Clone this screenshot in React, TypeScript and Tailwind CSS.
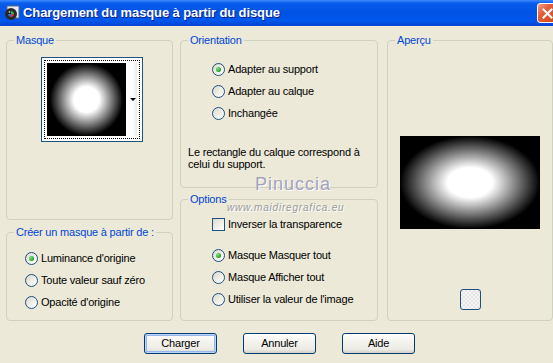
import React from "react";

const FONT = { fontFamily: '"Liberation Sans", Arial, sans-serif' };

function Radio({ checked }: { checked?: boolean }) {
  return (
    <div className="w-[13px] h-[13px] rounded-full border border-[#1C5180] bg-[linear-gradient(135deg,#DCD8CA_0%,#F2F1EC_60%,#FFFFFF_100%)] flex items-center justify-center shrink-0">
      {checked && (
        <div className="w-[5px] h-[5px] rounded-full bg-[radial-gradient(circle_at_35%_35%,#8CE08C_0%,#2CA82C_60%,#1A8A1A_100%)]" />
      )}
    </div>
  );
}

function Check() {
  return (
    <div className="w-[13px] h-[13px] border border-[#1C5180] bg-[linear-gradient(135deg,#DCD8CA_0%,#F2F1EC_60%,#FFFFFF_100%)] shrink-0" />
  );
}

function Row({ checked, label, check }: { checked?: boolean; label: string; check?: boolean }) {
  return (
    <div className="h-[22px] flex items-center gap-[3px]">
      {check ? <Check /> : <Radio checked={checked} />}
      <span className="text-[11px] leading-[13px] tracking-[-0.2px] text-black whitespace-nowrap">{label}</span>
    </div>
  );
}

function Group({
  label,
  className,
  children,
}: {
  label: string;
  className: string;
  children?: React.ReactNode;
}) {
  return (
    <fieldset className={`border border-[#D0D0BF] rounded-[4px] min-w-0 ${className}`}>
      <legend className="ml-[7px] px-[2px] text-[11px] leading-[14px] tracking-[-0.2px] text-[#0046D5] whitespace-nowrap">
        {label}
      </legend>
      {children}
    </fieldset>
  );
}

function XPButton({ label, def }: { label: string; def?: boolean }) {
  return (
    <div
      className={`w-[73px] h-[21px] rounded-[3px] border border-[#003C74] bg-[linear-gradient(180deg,#FFFFFF_0%,#F4F3EE_40%,#ECEBE6_80%,#D6D0C5_100%)] flex items-center justify-center text-[11px] tracking-[-0.2px] text-black ${
        def ? "shadow-[inset_0_0_0_1px_#BCD4F6,inset_0_0_0_2px_#97B7EC]" : ""
      }`}
    >
      {label}
    </div>
  );
}

function TitleIcon() {
  return (
    <svg width="16" height="16" viewBox="0 0 16 16">
      <rect x="3" y="1" width="12" height="12" fill="#e8eef8" stroke="#5a6a8a" strokeWidth="1" />
      <circle cx="7" cy="9" r="6" fill="#2a2a2a" />
      <circle cx="7" cy="9" r="3.2" fill="#111" />
      <path d="M7 6 A3 3 0 0 1 10 9 L7 9 Z" fill="#2fb24a" />
      <path d="M10 9 A3 3 0 0 1 7 12 L7 9 Z" fill="#d23a3a" />
      <path d="M7 12 A3 3 0 0 1 4 9 L7 9 Z" fill="#2f6fd8" />
      <circle cx="5.5" cy="7" r="1" fill="#bbb" />
    </svg>
  );
}

export default function App() {
  return (
    <div className="relative w-[553px] h-[363px] overflow-hidden bg-[#ECE9D8]" style={FONT}>
      {/* Title bar */}
      <div className="h-[26px] flex items-center bg-[linear-gradient(180deg,#3D8BFF_0%,#0A5CEC_12%,#0053E4_45%,#0058EC_80%,#0043D0_100%)]">
        <div className="ml-[4px] w-[16px] h-[16px]">
          <TitleIcon />
        </div>
        <div className="ml-[3px] text-white font-bold text-[13px] tracking-[-0.1px] whitespace-nowrap [text-shadow:1px_1px_0_#0A1E8A]">
          Chargement du masque à partir du disque
        </div>
        <div className="ml-auto mr-[-5px] w-[21px] h-[20px] rounded-[3px] border border-white bg-[linear-gradient(135deg,#F0A088_0%,#E2603E_35%,#D2461E_100%)] flex items-center justify-center">
          <svg width="11" height="11" viewBox="0 0 11 11">
            <path d="M1.5 1.5 L9.5 9.5 M9.5 1.5 L1.5 9.5" stroke="white" strokeWidth="2" strokeLinecap="square" />
          </svg>
        </div>
      </div>

      {/* Body */}
      <div className="pt-[7px] pl-[6px] flex">
        {/* Left column */}
        <div className="w-[167px] flex flex-col gap-[5px]">
          <Group label="Masque" className="h-[187px]">
            <div className="ml-[34px] mt-[10px] w-[102px] h-[85px] border border-[#1C5180] bg-white p-[2px]">
              <div className="w-full h-full border border-dotted border-black flex p-[2px]">
                <div className="w-[79px] h-full bg-[radial-gradient(circle_closest-side,#FFFFFF_0%,#FFFFFF_35%,#000000_100%)]" />
                <div className="flex-1 flex items-center justify-end pr-[1px] bg-[linear-gradient(90deg,#FFFFFF_60%,#ECEBE6_100%)]">
                  <div className="w-0 h-0 border-l-[3px] border-r-[3px] border-t-[3px] border-l-transparent border-r-transparent border-t-black" />
                </div>
              </div>
            </div>
          </Group>
          <Group label="Créer un masque à partir de :" className="h-[96px]">
            <div className="pl-[18px] mt-[8px]">
              <Row checked label="Luminance d'origine" />
              <Row label="Toute valeur sauf zéro" />
              <Row label="Opacité d'origine" />
            </div>
          </Group>
        </div>

        {/* Middle column */}
        <div className="ml-[7px] w-[198px] flex flex-col gap-[4px]">
          <Group label="Orientation" className="h-[155px]">
            <div className="pl-[31px] mt-[11px]">
              <Row checked label="Adapter au support" />
              <Row label="Adapter au calque" />
              <Row label="Inchangée" />
            </div>
            <div className="pl-[7px] mt-[22px] text-[11px] leading-[12px] tracking-[-0.2px] text-black">
              Le rectangle du calque correspond à
              <br />
              celui du support.
            </div>
          </Group>
          <Group label="Options" className="h-[129px]">
            <div className="pl-[31px] mt-[7px]">
              <Row check label="Inverser la transparence" />
            </div>
            <div className="pl-[31px] mt-[9px]">
              <Row checked label="Masque Masquer tout" />
              <Row label="Masque Afficher tout" />
              <Row label="Utiliser la valeur de l'image" />
            </div>
          </Group>
        </div>

        {/* Right column */}
        <div className="ml-[9px] w-[166px]">
          <Group label="Aperçu" className="h-[288px]">
            <div className="mx-auto mt-[89px] w-[140px] h-[93px] bg-[radial-gradient(ellipse_closest-side,#FFFFFF_0%,#FFFFFF_32%,#000000_100%)]" />
            <div className="mx-auto mt-[60px] w-[21px] h-[21px] rounded-[3px] border border-[#1C5180] bg-[repeating-conic-gradient(#F4F4F4_0%_25%,#E6E6E6_0%_50%)] bg-[length:4px_4px]" />
          </Group>
        </div>
      </div>

      {/* Buttons */}
      <div className="mt-[12px] pl-[144px] flex gap-[26px]">
        <XPButton label="Charger" def />
        <XPButton label="Annuler" />
        <XPButton label="Aide" />
      </div>

      {/* Watermark */}
      <div className="absolute left-[255px] top-[174px] text-[18px] leading-[20px] tracking-[1px] text-[#A2A2BE] [text-shadow:1px_1px_0_#FFFFFF]">
        Pinuccia
      </div>
      <div className="absolute left-[227px] top-[202px] text-[10px] leading-[12px] tracking-[0.8px] italic text-[#9A9A9A] [text-shadow:1px_1px_0_#FFFFFF]">
        www.maidiregrafica.eu
      </div>
    </div>
  );
}
